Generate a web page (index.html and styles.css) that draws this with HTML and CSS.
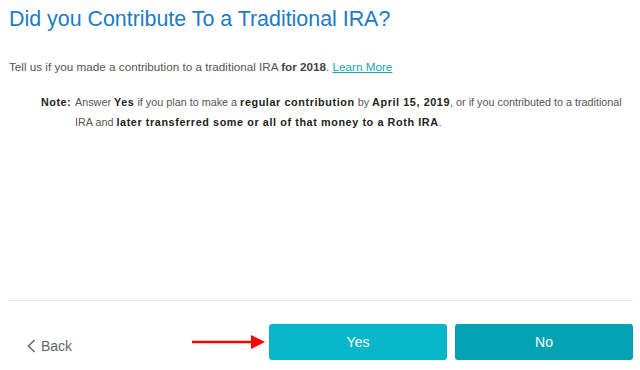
FILE: index.html
```html
<!DOCTYPE html>
<html lang="en">

<head>
    <meta charset="UTF-8">
    <meta name="viewport" content="width=device-width, initial-scale=1.0">
    <title>Traditional IRA</title>
    <link rel="stylesheet" href="styles.css">
</head>

<body>
    <div class="page">
        <div class="content">
            <h1 class="title">Did you Contribute To a Traditional IRA?</h1>
            <p class="intro">Tell us if you made a contribution to a traditional IRA <b>for 2018</b>. <a href="#">Learn More</a></p>
            <div class="note">
                <span class="note-label">Note:</span>
                <p class="note-text">Answer <b>Yes</b> if you plan to make a <b>regular contribution</b> by <b>April 15, 2019</b>, or if you contributed to a traditional<br>IRA and <b>later transferred some or all of that money to a Roth IRA</b>.</p>
            </div>
        </div>
        <div class="footer">
            <a class="back" href="#">
                <svg width="9" height="14" viewBox="0 0 9 14"><path d="M7.5 1 L1.5 7 L7.5 13" fill="none" stroke="#666" stroke-width="1.5"/></svg>
                Back
            </a>
            <div class="actions">
                <svg class="arrow" width="73" height="14" viewBox="0 0 73 14"><line x1="0" y1="7" x2="61" y2="7" stroke="#f00" stroke-width="2.5"/><polygon points="59,0 73,7 59,14" fill="#f00"/></svg>
                <button class="btn btn-yes">Yes</button>
                <button class="btn btn-no">No</button>
            </div>
        </div>
    </div>
</body>

</html>
```

FILE: styles.css
```css
html, body {
    margin: 0;
    height: 100%;
}

body {
    font-family: "Liberation Sans", Arial, sans-serif;
    background-color: #fff;
    color: #555;
}

.page {
    height: 100%;
    display: flex;
    flex-direction: column;
    padding: 0 7px 0 8px;
    box-sizing: border-box;
}

.content {
    flex: 1;
    padding-left: 1px;
}

.title {
    margin: 7px 0 0;
    font-size: 21.4px;
    font-weight: normal;
    color: #1b7bc8;
    line-height: 25px;
}

.intro {
    margin: 27px 0 0;
    font-size: 11.7px;
    line-height: 16px;
}

.intro b {
    color: #444;
}

.intro a {
    color: #1aa3b4;
}

.note {
    display: flex;
    margin: 17px 0 0 32px;
    font-size: 10.8px;
    line-height: 20px;
    color: #555;
}

.note-label {
    flex: none;
    width: 34px;
    font-weight: bold;
    letter-spacing: 0.5px;
    color: #222;
}

.note-text {
    margin: 0;
    width: 560px;
}

.note-text b {
    color: #222;
    letter-spacing: 0.6px;
}

.footer {
    border-top: 1px solid #eaeaea;
    height: 69px;
    display: flex;
    align-items: center;
    justify-content: space-between;
    padding: 0 0 0 19px;
}

.back {
    display: flex;
    align-items: center;
    gap: 5px;
    font-size: 14px;
    color: #666;
    text-decoration: none;
    margin-top: 21px;
}

.actions {
    display: flex;
    align-items: center;
    gap: 8px;
    margin-top: 12px;
}

.arrow {
    margin-right: -4px;
}

.btn {
    width: 178px;
    height: 36px;
    border: none;
    border-radius: 3px;
    color: #fff;
    font-family: "Liberation Sans", Arial, sans-serif;
    font-size: 14px;
    cursor: pointer;
}

.btn-yes {
    background-color: #06b7c9;
}

.btn-no {
    background-color: #04a2b3;
}
```
